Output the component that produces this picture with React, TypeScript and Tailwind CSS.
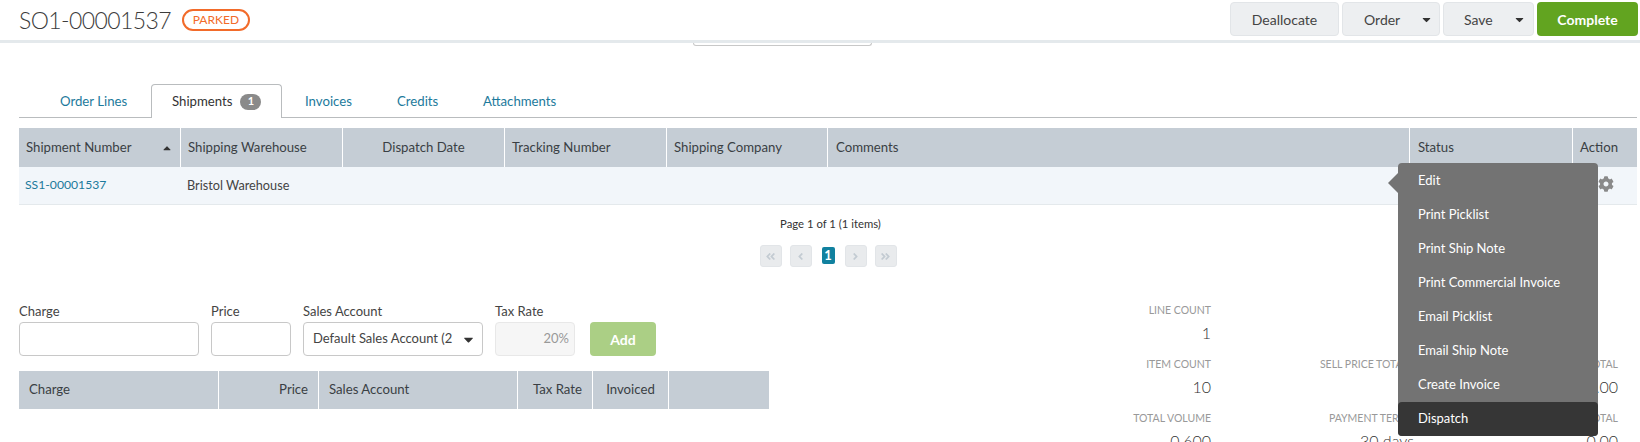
import { FaCog, FaCaretDown, FaCaretUp, FaAngleDoubleLeft, FaAngleLeft, FaAngleRight, FaAngleDoubleRight } from "react-icons/fa";

const shipCols = [
  { label: "Shipment Number", w: "w-[162px]", sort: true },
  { label: "Shipping Warehouse", w: "w-[162px]" },
  { label: "Dispatch Date", w: "w-[162px]", center: true },
  { label: "Tracking Number", w: "w-[162px]" },
  { label: "Shipping Company", w: "w-[161px]" },
  { label: "Comments", w: "w-[582px] pl-[8px]" },
  { label: "Status", w: "w-[163px] pl-[8px]" },
  { label: "Action", w: "w-[64px]" },
];

const chargeCols = [
  { label: "Charge", w: "w-[200px]" },
  { label: "Price", w: "w-[100px]", right: true },
  { label: "Sales Account", w: "w-[199px]" },
  { label: "Tax Rate", w: "w-[75px]", right: true },
  { label: "Invoiced", w: "w-[76px]", center: true },
  { label: "", w: "w-[100px]" },
];

const menu = ["Edit", "Print Picklist", "Print Ship Note", "Print Commercial Invoice", "Email Picklist", "Email Ship Note", "Create Invoice", "Dispatch"];

const stats = [
  { label: "LINE COUNT", value: "1", pad: "" },
  { label: "", value: "", pad: "" },
  { label: "", value: "", pad: "" },
  { label: "ITEM COUNT", value: "10", pad: "" },
  { label: "SELL PRICE TOTAL", value: "0", pad: "pr-[6px]" },
  { label: "SUB TOTAL", value: "0.00", pad: "" },
  { label: "TOTAL VOLUME", value: "0.600", pad: "" },
  { label: "PAYMENT TERMS", value: "30 days", pad: "" },
  { label: "TAX TOTAL", value: "0.00", pad: "" },
];

function PagerBtn({ children }: { children: React.ReactNode }) {
  return (
    <div className="flex h-[22px] w-[22px] items-center justify-center rounded-[3px] border border-[#e2e5e8] bg-[#e9ebed] text-[11px] text-[#c3cbd2]">
      {children}
    </div>
  );
}

function Field({ label, w, children }: { label: string; w: string; children: React.ReactNode }) {
  return (
    <div className={`${w} flex flex-col`}>
      <label className="h-[21px] text-[13px] leading-[20px] text-[#444]">{label}</label>
      {children}
    </div>
  );
}

export default function App() {
  return (
    <div className="relative h-[442px] w-[1640px] overflow-hidden bg-white font-['Lato','Liberation_Sans',sans-serif] text-[#333]">
      <header className="flex h-[40px] items-start justify-between pl-[19px] pr-[2px] pt-[2px]">
        <div className="flex items-center pt-[2px]">
          <h1 className="text-[23px] font-light leading-[32px] tracking-[-0.6px] text-[#3c3c3c]">SO1-00001537</h1>
          <span className="ml-[11px] flex h-[22px] w-[68px] items-center justify-center rounded-[11px] border-2 border-[#f26b2a] text-[12px] font-normal text-[#f26b2a]">PARKED</span>
        </div>
        <div className="flex gap-[3px]">
          <button className="h-[34px] w-[109px] rounded-[4px] border border-[#e2e5e8] bg-[#edeff1] text-[14px] text-[#444]">Deallocate</button>
          <button className="relative flex h-[34px] w-[98px] items-center rounded-[4px] border border-[#e2e5e8] bg-[#edeff1] pl-[21px] text-[14px] text-[#444]">
            Order
            <FaCaretDown className="ml-[20px] text-[13px] text-[#333]" />
          </button>
          <button className="relative flex h-[34px] w-[91px] items-center rounded-[4px] border border-[#e2e5e8] bg-[#edeff1] pl-[20px] text-[14px] text-[#444]">
            Save
            <FaCaretDown className="ml-[20px] text-[13px] text-[#333]" />
          </button>
          <button className="h-[34px] w-[101px] rounded-[4px] bg-[#62a420] text-[14px] font-bold text-white">Complete</button>
        </div>
      </header>
      <div className="relative h-[3px] bg-[#e4e9ec]">
        <div className="absolute left-[693px] top-[3px] h-[3px] w-[179px] rounded-b-[3px] border border-t-0 border-[#c8c8c8]" />
      </div>

      <main className="pl-[19px] pr-[3px]">
        <nav className="mt-[41px] flex h-[34px] items-end border-b border-[#b9bcbe] text-[13.2px] text-[#1c7a9c]">
          <a className="ml-[41px] mb-[7px] w-[91px] leading-[18px]">Order Lines</a>
          <a className="relative top-px flex h-[34px] w-[131px] items-center rounded-t-[4px] border border-b-0 border-[#b9bcbe] bg-white pl-[20px] text-[#333]">
            Shipments
            <span className="ml-[8px] flex h-[16px] w-[21px] items-center justify-center rounded-[8px] bg-[#8a8a8a] text-[11px] font-bold text-white">1</span>
          </a>
          <a className="ml-[23px] mb-[7px] w-[92px] leading-[18px]">Invoices</a>
          <a className="mb-[7px] w-[86px] leading-[18px]">Credits</a>
          <a className="mb-[7px] leading-[18px]">Attachments</a>
        </nav>

        <div className="mt-[10px] flex h-[39px] bg-[#c5cdd5] text-[13.2px] text-[#3a3f44]">
          {shipCols.map((c, i) => (
            <div key={c.label} className={`${c.w} flex items-center px-[7px] ${i < shipCols.length - 1 ? "border-r border-white" : ""} ${c.center ? "justify-center" : ""} ${c.sort ? "justify-between" : ""}`}>
              {c.label}
              {c.sort && <FaCaretUp className="text-[12px] text-[#333]" />}
            </div>
          ))}
        </div>
        <div className="flex h-[38px] items-center border-b border-[#e4e9ec] bg-[#f2f6fa]">
          <a className="w-[162px] px-[6px] text-[12.2px] text-[#1c7a9c]">SS1-00001537</a>
          <span className="px-[6px] text-[12.7px] text-[#444]">Bristol Warehouse</span>
        </div>

        <div className="mt-[11px] pl-[5px] text-center text-[11.3px] leading-[16px] text-[#333]">Page 1 of 1 (1 items)</div>
        <div className="mt-[13px] flex justify-center gap-[8px]">
          <PagerBtn><FaAngleDoubleLeft /></PagerBtn>
          <PagerBtn><FaAngleLeft /></PagerBtn>
          <div className="mx-[2px] mt-[2px] flex h-[17px] w-[13px] items-center justify-center rounded-[2px] bg-[#11819f] text-[13px] font-bold text-white">1</div>
          <PagerBtn><FaAngleRight /></PagerBtn>
          <PagerBtn><FaAngleDoubleRight /></PagerBtn>
        </div>

        <div className="mt-[34px] flex">
          <div className="w-[1070px]">
            <form className="flex items-end">
              <Field label="Charge" w="w-[180px]">
                <input className="h-[34px] rounded-[4px] border border-[#c8c8c8] bg-white" />
              </Field>
              <Field label="Price" w="ml-[12px] w-[80px]">
                <input className="h-[34px] w-[80px] rounded-[4px] border border-[#c8c8c8] bg-white" />
              </Field>
              <Field label="Sales Account" w="ml-[12px] w-[180px]">
                <div className="flex h-[34px] items-center justify-between rounded-[4px] border border-[#c8c8c8] bg-white pl-[9px] pr-[6px] text-[13px] text-[#444]">
                  <span className="w-[140px] overflow-hidden whitespace-nowrap">Default Sales Account (2</span>
                  <FaCaretDown className="text-[15px] text-[#333]" />
                </div>
              </Field>
              <Field label="Tax Rate" w="ml-[12px] w-[80px]">
                <div className="flex h-[34px] items-center justify-end rounded-[4px] border border-[#e8e8e8] bg-[#f6f6f6] pr-[5px] text-[13px] text-[#999]">20%</div>
              </Field>
              <button type="button" className="ml-[15px] h-[34px] w-[66px] rounded-[4px] bg-[#abcf85] text-[14px] font-bold text-white">Add</button>
            </form>
            <div className="mt-[15px] flex h-[38px] w-[750px] bg-[#c5cdd5] text-[13.2px] text-[#3a3f44]">
              {chargeCols.map((c, i) => (
                <div key={i} className={`${c.w} flex items-center px-[10px] ${i < chargeCols.length - 1 ? "border-r border-white" : ""} ${c.right ? "justify-end" : ""} ${c.center ? "justify-center" : ""}`}>
                  {c.label}
                </div>
              ))}
            </div>
          </div>
          <div className="mt-[1px] grid h-fit w-[528px] grid-cols-[122px_203px_204px] text-right">
            {stats.map((s, i) => (
              <div key={i} className="h-[54px]">
                <div className={`${s.pad} text-[10.5px] leading-[16px] text-[#999]`}>{s.label}</div>
                <div className="mt-[3px] text-[16px] leading-[24px] font-light text-[#333]">{s.value}</div>
              </div>
            ))}
          </div>
        </div>
      </main>

      <div className="absolute left-[1398px] top-[163px] w-[200px] rounded-[4px] bg-[#737373] pt-[1px] text-[13px] text-white">
        <div className="absolute -left-[10px] top-[10px] h-0 w-0 border-y-[10px] border-r-[10px] border-y-transparent border-r-[#737373]" />
        {menu.map((m) => (
          <div key={m} className={`flex h-[34px] items-center pl-[20px] ${m === "Dispatch" ? "rounded-[4px] bg-[#363636]" : ""}`}>{m}</div>
        ))}
      </div>
      <FaCog className="absolute left-[1598px] top-[176px] text-[16px] text-[#8a8a8a]" />
    </div>
  );
}
